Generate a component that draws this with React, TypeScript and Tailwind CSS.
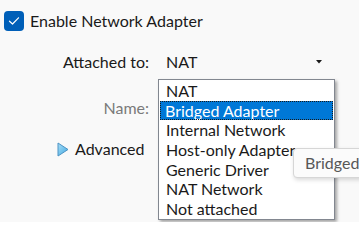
import type { FC } from 'react';

const items = [
  'NAT',
  'Bridged Adapter',
  'Internal Network',
  'Host-only Adapter',
  'Generic Driver',
  'NAT Network',
  'Not attached',
];

const CheckBox: FC = () => (
  <div className="flex items-center justify-center w-[20px] h-[20px] rounded-[4px] bg-[#005fb8]">
    <svg width="12" height="10" viewBox="0 0 12 10" fill="none">
      <path d="M1.5 5.2 L4.5 8 L10.5 1.8" stroke="white" strokeWidth="1.2" strokeLinecap="round" strokeLinejoin="round" />
    </svg>
  </div>
);

const ExpandArrow: FC = () => (
  <svg width="12" height="15" viewBox="0 0 12 15">
    <defs>
      <linearGradient id="arrowFill" x1="0" y1="0" x2="1" y2="1">
        <stop offset="0" stopColor="#a9def7" />
        <stop offset="1" stopColor="#3fa9e2" />
      </linearGradient>
    </defs>
    <path d="M1 1 L11 7.5 L1 14 Z" fill="url(#arrowFill)" stroke="#4d93c4" strokeWidth="1" strokeLinejoin="round" />
  </svg>
);

export default function App() {
  return (
    <div
      className="relative w-[359px] h-[222px] overflow-hidden bg-[#f9f9f9] text-[16px] text-[#1a1a1a]"
      style={{ fontFamily: 'Lato, "Noto Sans", sans-serif' }}
    >
      <div className="flex flex-col">
        <div className="flex items-center h-[42px] pl-[4px] gap-[6px]">
          <CheckBox />
          <span>Enable Network Adapter</span>
        </div>

        <div className="flex items-center h-[40px]">
          <span className="w-[149px] text-right">Attached to:</span>
          <div className="flex items-center justify-between w-[156px] ml-[17px]">
            <span>NAT</span>
            <svg width="6" height="4" viewBox="0 0 6 4">
              <path d="M0 0 L6 0 L3 3.5 Z" fill="#1a1a1a" />
            </svg>
          </div>
        </div>

        <div className="flex items-center h-[52px]">
          <span className="w-[149px] text-right text-[#7a7a7a]">Name:</span>
        </div>

        <div className="flex items-center h-[30px] pl-[57px] gap-[6px]">
          <ExpandArrow />
          <span>Advanced</span>
        </div>
      </div>

      <ul className="absolute left-[158px] top-[79px] w-[177px] h-[141px] pt-[1px] px-[1px] bg-white border border-[#828790] shadow-[2px_2px_3px_rgba(0,0,0,0.35)]">
        {items.map((item) => (
          <li
            key={item}
            className={
              item === 'Bridged Adapter'
                ? 'flex items-center h-[19.7px] pl-[5px] whitespace-nowrap bg-[#0078d7] text-white outline outline-1 outline-dotted outline-[#1a1a1a] -outline-offset-1'
                : 'flex items-center h-[19.7px] pl-[6px] whitespace-nowrap'
            }
          >
            {item}
          </li>
        ))}
      </ul>

      <div className="absolute left-[293px] top-[148px] h-[30px] w-[130px] flex items-center pl-[11px] whitespace-nowrap bg-[#fbfbfb] border border-[#d6d6d6] rounded-[4px] shadow-[1px_2px_4px_rgba(0,0,0,0.15)] text-[#575757]">
        Bridged Adapter
      </div>
    </div>
  );
}
